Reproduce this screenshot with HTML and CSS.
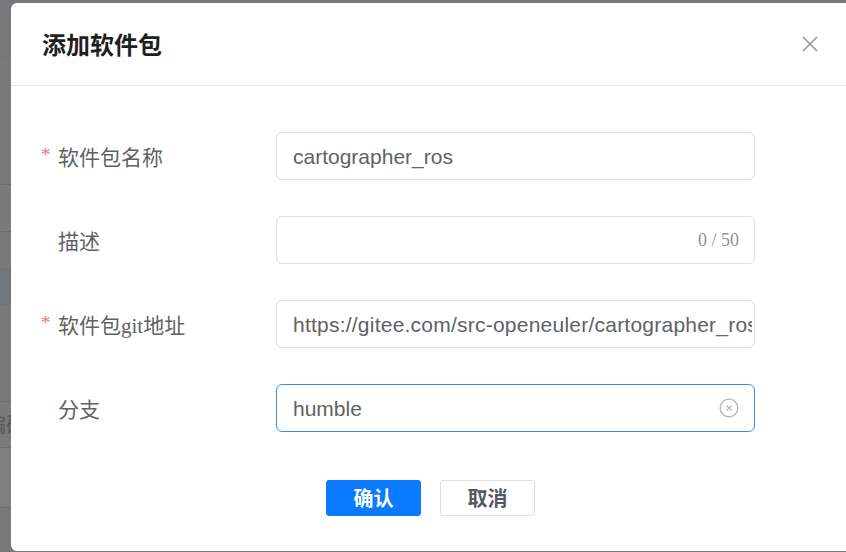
FILE: index.html
```html
<!DOCTYPE html>
<html lang="zh-CN">
<head>
<meta charset="utf-8">
<title>添加软件包</title>
<link rel="stylesheet" href="styles.css">
</head>
<body>
<div class="backdrop">
  <div class="bg-row bg-top"></div>
  <div class="bg-row bg-r1"></div>
  <div class="bg-row bg-r2"></div>
  <div class="bg-row bg-r3"></div>
  <div class="bg-row bg-band"></div>
  <div class="bg-row bg-r4"></div>
  <div class="bg-row bg-r5"><span class="bg-text">编确/</span></div>
  <div class="bg-row bg-r6"></div>
  <div class="bg-row bg-r7"></div>
</div>

<div class="dialog">
  <div class="dialog-header">
    <span class="dialog-title">添加软件包</span>
    <button class="close" type="button" aria-label="close">
      <svg width="16" height="16" viewBox="0 0 16 16"><path d="M1 1 L15 15 M15 1 L1 15" stroke="#909399" stroke-width="1.5" fill="none"/></svg>
    </button>
  </div>
  <div class="dialog-body">
    <form class="form">
      <div class="form-item">
        <label class="label"><span class="req">*</span>软件包名称</label>
        <div class="field"><input class="input" type="text" value="cartographer_ros"></div>
      </div>
      <div class="form-item">
        <label class="label"><span class="req"></span>描述</label>
        <div class="field"><input class="input" type="text" value=""><span class="count">0 / 50</span></div>
      </div>
      <div class="form-item">
        <label class="label"><span class="req">*</span>软件包git地址</label>
        <div class="field"><input class="input input-long" type="text" value="https://gitee.com/src-openeuler/cartographer_ros"></div>
      </div>
      <div class="form-item">
        <label class="label"><span class="req"></span>分支</label>
        <div class="field"><input class="input input-focus" type="text" value="humble">
          <span class="clear"><svg width="20" height="20" viewBox="0 0 20 20"><circle cx="10" cy="10" r="8.8" stroke="#b4b7bd" stroke-width="1.3" fill="none"/><path d="M7.5 7.5 L12.5 12.5 M12.5 7.5 L7.5 12.5" stroke="#b4b7bd" stroke-width="1.3"/></svg></span>
        </div>
      </div>
    </form>
    <div class="footer">
      <button class="btn btn-primary" type="button">确认</button>
      <button class="btn btn-default" type="button">取消</button>
    </div>
  </div>
</div>
</body>
</html>
```

FILE: styles.css
```css
html, body {
  margin: 0;
  padding: 0;
  width: 846px;
  height: 552px;
  overflow: hidden;
  background: #7a7a7a;
  font-family: "Liberation Sans", "Noto Sans CJK SC", sans-serif;
}

.backdrop {
  display: flex;
  flex-direction: column;
  height: 552px;
}
.bg-row { background: #7a7a7a; }
.bg-top { height: 62px; background: #777879; }
.bg-r1 { height: 122px; border-bottom: 1px solid #6c6c6c; }
.bg-r2 { height: 46px; border-bottom: 1px solid #6c6c6c; }
.bg-r3 { height: 36px; }
.bg-band { height: 37px; background: #71767a; }
.bg-r4 { height: 96px; border-bottom: 1px solid #6e6e6e; }
.bg-r5 { height: 45px; border-bottom: 1px solid #6e6e6e; overflow: hidden; }
.bg-r6 { height: 59px; background: #7e7e7e; border-bottom: 1px solid #707070; }
.bg-r7 { flex: 1; }
.bg-text {
  display: block;
  margin-left: -15px;
  margin-top: 6px;
  font-size: 21px;
  color: #55575b;
  font-family: "Noto Sans CJK SC", sans-serif;
  white-space: nowrap;
}

.dialog {
  position: absolute;
  left: 11px;
  top: 3px;
  width: 860px;
  background: #fff;
  border-radius: 6px;
}

.dialog-header {
  height: 83px;
  box-sizing: border-box;
  padding: 0 53px 0 31px;
  display: flex;
  align-items: center;
  justify-content: space-between;
  border-bottom: 1px solid #e3e5ef;
}
.dialog-title {
  font-family: "Noto Sans CJK SC", sans-serif;
  font-weight: 700;
  font-size: 24px;
  color: #1f1f22;
  line-height: 1;
}
.close {
  border: 0;
  background: none;
  padding: 0;
  width: 16px;
  height: 16px;
  display: flex;
}

.dialog-body {
  padding: 46px 0 35px 30px;
}

.form {
  display: flex;
  flex-direction: column;
  gap: 36px;
}
.form-item {
  display: flex;
  align-items: center;
  height: 48px;
}
.label {
  width: 235px;
  font-family: "Liberation Serif", "Noto Sans CJK SC", serif;
  font-size: 21px;
  color: #606266;
  display: flex;
  align-items: center;
}
.req {
  display: inline-block;
  width: 17px;
  color: #f56c6c;
  font-size: 19px;
  position: relative;
  top: -1px;
}
.field {
  position: relative;
  width: 479px;
  height: 48px;
}
.input {
  box-sizing: border-box;
  width: 100%;
  height: 48px;
  border: 1px solid #dcdfe6;
  border-radius: 6px;
  padding: 1px 16px 0;
  font-family: "Liberation Sans", "Noto Sans CJK SC", sans-serif;
  font-size: 21px;
  color: #606266;
  background: #fff;
  outline: none;
}
.input-long { padding-right: 2px; letter-spacing: 0.23px; }
.input-focus { border: 1.5px solid #3a8ee6; }
.count {
  position: absolute;
  right: 16px;
  top: 0;
  height: 48px;
  display: flex;
  align-items: center;
  font-family: "Liberation Serif", serif;
  font-size: 18px;
  color: #909399;
}
.clear {
  position: absolute;
  right: 16px;
  top: 14px;
  width: 20px;
  height: 20px;
  display: flex;
}

.footer {
  display: flex;
  gap: 19px;
  margin-top: 48px;
  padding-left: 285px;
}
.btn {
  box-sizing: border-box;
  width: 95px;
  height: 36px;
  border-radius: 3px;
  font-family: "Noto Sans CJK SC", sans-serif;
  font-weight: 700;
  font-size: 20px;
  line-height: 1;
  padding: 0;
  display: flex;
  align-items: center;
  justify-content: center;
  cursor: pointer;
}
.btn-primary {
  background: #0a7bff;
  border: 1px solid #0a7bff;
  color: #fff;
}
.btn-default {
  background: #fff;
  border: 1px solid #dcdfe6;
  color: #55585e;
}
```
